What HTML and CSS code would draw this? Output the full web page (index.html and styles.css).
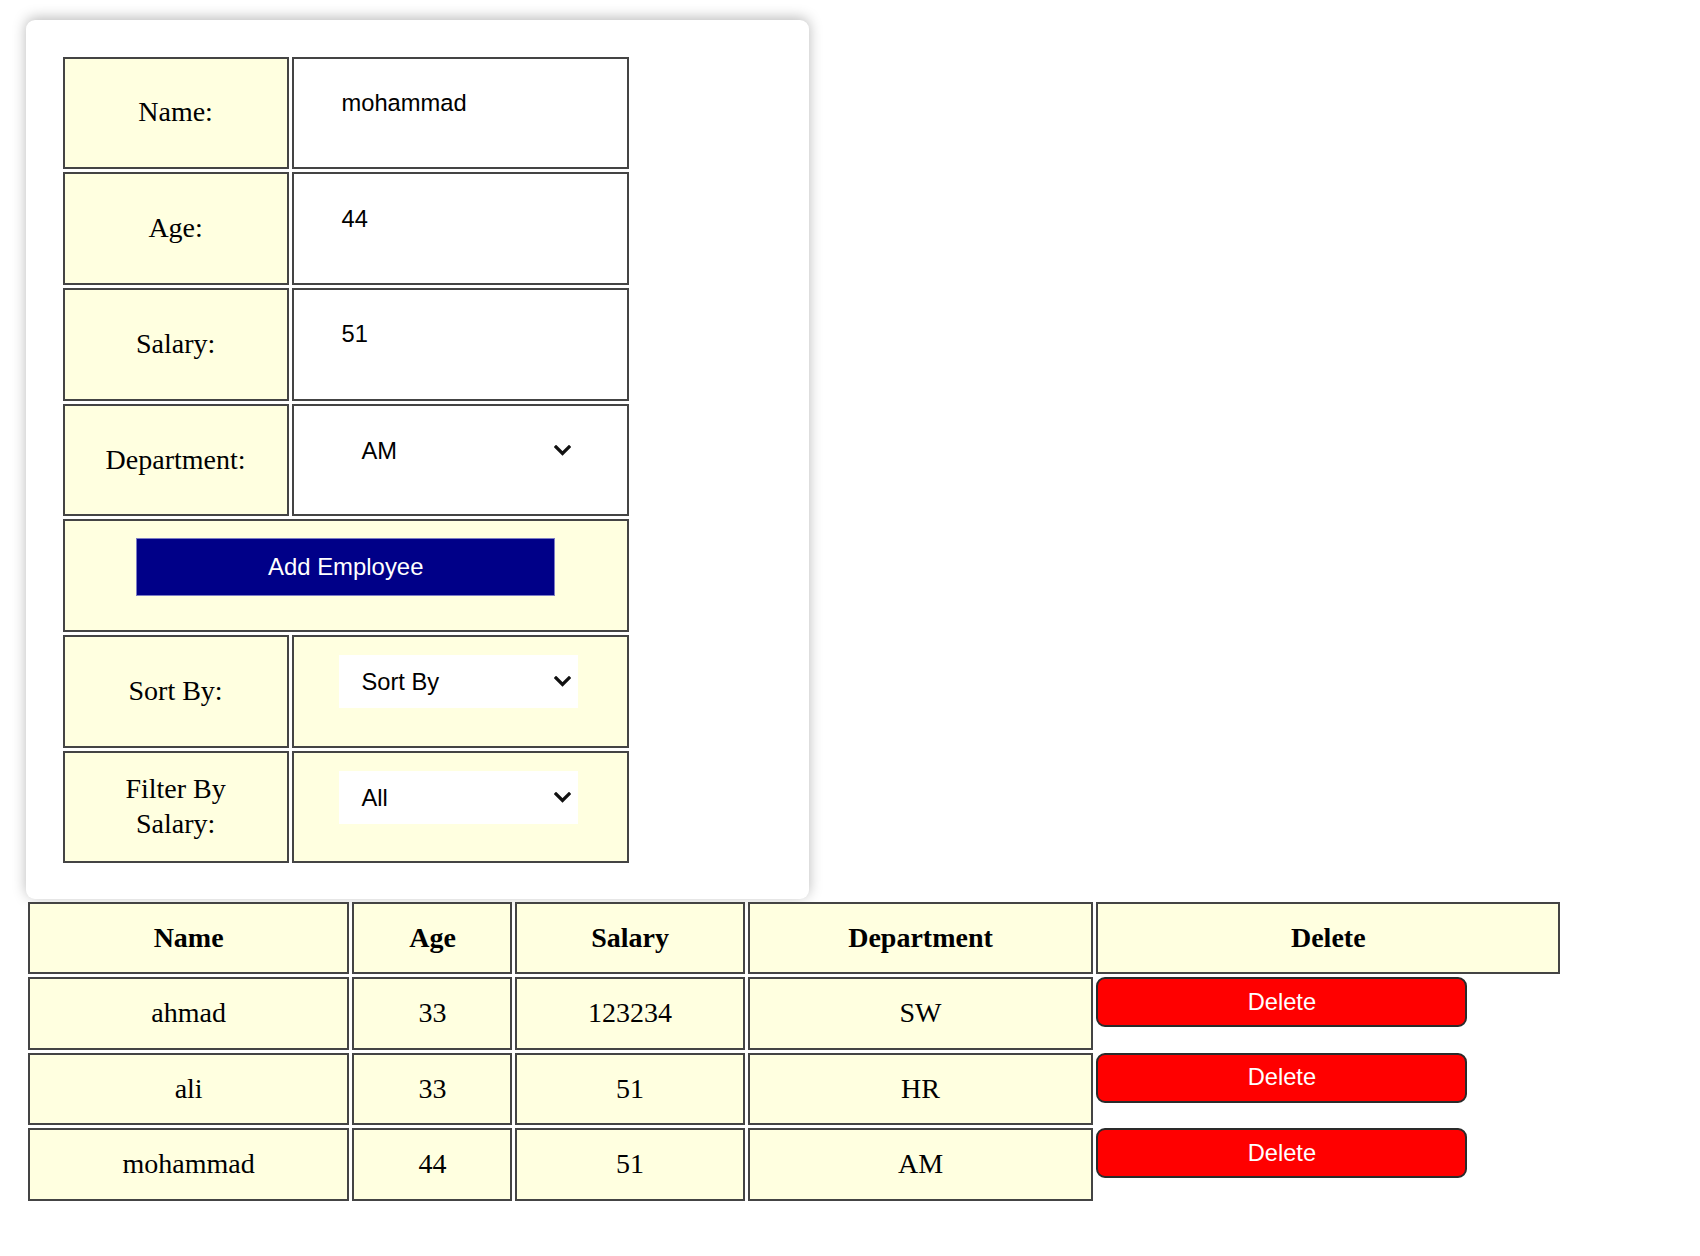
FILE: index.html
```html
<!DOCTYPE html>
<html>
<head>
<meta charset="utf-8">
<title>Employees</title>
<link rel="stylesheet" href="styles.css">
</head>
<body>
<div class="card">
  <table class="form-table">
    <tr>
      <td class="label">Name:</td>
      <td class="value white"><input class="field" type="text" value="mohammad"></td>
    </tr>
    <tr>
      <td class="label">Age:</td>
      <td class="value white"><input class="field" type="text" value="44"></td>
    </tr>
    <tr>
      <td class="label">Salary:</td>
      <td class="value white"><input class="field" type="text" value="51"></td>
    </tr>
    <tr>
      <td class="label">Department:</td>
      <td class="value white">
        <span class="select-wrap">
          <select class="field select"><option>AM</option><option>SW</option><option>HR</option></select>
          <svg class="chev" viewBox="0 0 17 11" width="17" height="11"><path d="M2 2 L8.5 8.5 L15 2" fill="none" stroke="#111" stroke-width="3.2" stroke-linecap="square"/></svg>
        </span>
      </td>
    </tr>
    <tr>
      <td class="add-cell" colspan="2"><button class="add-btn">Add Employee</button></td>
    </tr>
    <tr>
      <td class="label">Sort By:</td>
      <td class="value">
        <span class="select-wrap">
          <select class="field select"><option>Sort By</option><option>Name</option><option>Age</option><option>Salary</option></select>
          <svg class="chev" viewBox="0 0 17 11" width="17" height="11"><path d="M2 2 L8.5 8.5 L15 2" fill="none" stroke="#111" stroke-width="3.2" stroke-linecap="square"/></svg>
        </span>
      </td>
    </tr>
    <tr>
      <td class="label">Filter By Salary:</td>
      <td class="value">
        <span class="select-wrap">
          <select class="field select"><option>All</option></select>
          <svg class="chev" viewBox="0 0 17 11" width="17" height="11"><path d="M2 2 L8.5 8.5 L15 2" fill="none" stroke="#111" stroke-width="3.2" stroke-linecap="square"/></svg>
        </span>
      </td>
    </tr>
  </table>
</div>
<table class="emp-table">
  <thead>
    <tr>
      <th class="c-name">Name</th>
      <th class="c-age">Age</th>
      <th class="c-salary">Salary</th>
      <th class="c-dept">Department</th>
      <th class="c-del">Delete</th>
    </tr>
  </thead>
  <tbody>
    <tr>
      <td>ahmad</td><td>33</td><td>123234</td><td>SW</td>
      <td class="del-cell"><button class="del-btn">Delete</button></td>
    </tr>
    <tr>
      <td>ali</td><td>33</td><td>51</td><td>HR</td>
      <td class="del-cell"><button class="del-btn">Delete</button></td>
    </tr>
    <tr>
      <td>mohammad</td><td>44</td><td>51</td><td>AM</td>
      <td class="del-cell"><button class="del-btn">Delete</button></td>
    </tr>
  </tbody>
</table>
</body>
</html>
```

FILE: styles.css
```css
* {
  box-sizing: border-box;
}

body {
  margin: 0;
  background: #ffffff;
  color: #000000;
  font-family: "Liberation Serif", "Times New Roman", serif;
  font-size: 28px;
}

.card {
  margin: 20px 0 0 26px;
  width: 783px;
  height: 878.5px;
  padding: 33.5px 0 0 33.5px;
  background: #ffffff;
  border-radius: 9px;
  box-shadow: 0 -2px 14px rgba(0, 0, 0, 0.28);
}

.form-table {
  border-collapse: separate;
  border-spacing: 3.5px;
}

.form-table td {
  border: 2px solid #444444;
  height: 112.7px;
}

.label {
  width: 226.2px;
  padding: 0 20px;
  background: #ffffe0;
  text-align: center;
  vertical-align: middle;
  line-height: 1.24;
}

.value {
  width: 337.3px;
  padding: 18.5px 0 0 45.8px;
  background: #ffffe0;
  vertical-align: top;
}

.value.white {
  background: #ffffff;
}

.field {
  display: block;
  width: 239px;
  height: 53px;
  margin: 0;
  padding: 0 0 0 2px;
  border: none;
  outline: none;
  background: #ffffff;
  color: #000000;
  font-family: "Liberation Sans", Arial, sans-serif;
  font-size: 23.7px;
}

.select-wrap {
  position: relative;
  display: block;
  width: 239px;
}

.select {
  -webkit-appearance: none;
  appearance: none;
  padding-left: 22px;
  border-radius: 0;
}

.chev {
  position: absolute;
  right: 7px;
  top: 21px;
  pointer-events: none;
}

.add-cell {
  padding: 17px 0 0 0;
  background: #ffffe0;
  text-align: center;
  vertical-align: top;
}

.add-btn {
  width: 419px;
  height: 58px;
  margin: 0;
  padding: 0;
  border: 1px solid #7c7cc4;
  background: #000088;
  color: #ffffff;
  font-family: "Liberation Sans", Arial, sans-serif;
  font-size: 23.9px;
}

.emp-table {
  margin-left: 24.8px;
  border-collapse: separate;
  border-spacing: 3.5px;
}

.emp-table th,
.emp-table td {
  height: 72.5px;
  padding: 0;
  border: 2px solid #444444;
  background: #ffffe0;
  text-align: center;
  vertical-align: middle;
  font-size: 28px;
}

.emp-table th {
  font-weight: bold;
}

.c-name { width: 321.7px; }
.c-age { width: 160px; }
.c-salary { width: 229.2px; }
.c-dept { width: 345.7px; }
.c-del { width: 463.8px; }

.emp-table td.del-cell {
  border: none;
  background: transparent;
  padding: 0 0 0 0;
  text-align: left;
  vertical-align: top;
}

.del-btn {
  display: block;
  width: 80%;
  height: 50px;
  margin: 0;
  padding: 0;
  border: 2px solid #2a2a2a;
  border-radius: 9px;
  background: #ff0000;
  color: #ffffff;
  font-family: "Liberation Sans", Arial, sans-serif;
  font-size: 23.7px;
}
```
